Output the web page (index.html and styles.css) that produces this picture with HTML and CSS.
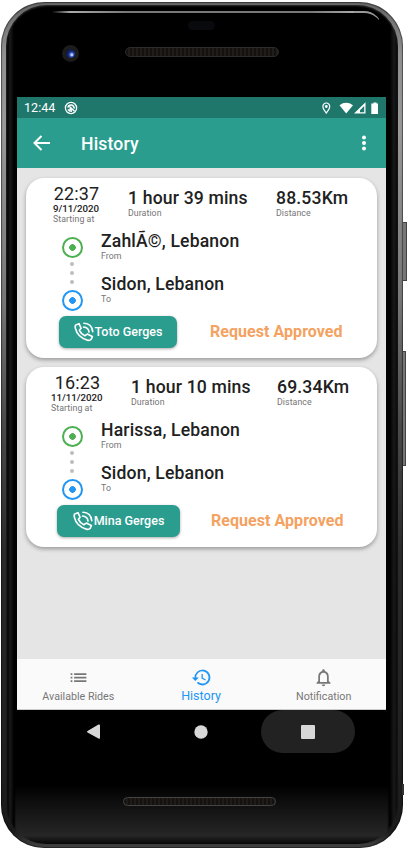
FILE: index.html
```html
<!DOCTYPE html>
<html lang="en">
<head>
<meta charset="utf-8">
<title>History</title>
<link rel="stylesheet" href="styles.css">
</head>
<body>
<svg width="0" height="0" class="defs">
  <symbol id="call" viewBox="0 0 24 24"><g fill="none" stroke="currentColor" stroke-width="2" stroke-linecap="round" stroke-linejoin="round"><path d="M2 3.500 6 2 8.500 7.500 6.500 10Q8.500 14.500 13 16.500L16 14.500 22 17.500 20.500 21Q19 22.500 16 21.800 4 18 1.800 8 1 5 2 3.500Z"/><path d="M12 1.500Q21.500 2 22.500 11.500M11.500 6Q17.500 6.500 18 12"/></g></symbol>
</svg>
<div class="phone">
  <i class="key power"></i><i class="key volume"></i><i class="key lower"></i>
  <div class="glass">
    <i class="shine"></i><i class="shine-end"></i><i class="sensor"></i><i class="camera"></i><i class="speaker top"></i>
    <main class="screen">
      <div class="status">
        <span>12:44</span>
        <svg class="nosync" viewBox="0 0 14 14" fill="none" stroke="#fff"><circle cx="7" cy="7" r="5.600" stroke-width="1.300"/><path d="M3.800 6.500Q4.500 3.700 7.500 3.900 10.200 4.400 10.200 7.500M4 8.300Q5 10.300 8 10.200M5.500 5.500 10.500 10.300M5.500 7.500Q6.500 8.800 8 8.500" stroke-width="1.500"/></svg>
        <svg class="signals" viewBox="0 0 60 14" fill="#fff"><path d="M7.300 2a3.400 3.400 0 0 0-3.400 3.600C3.900 8 7.300 12 7.300 12s3.400-4 3.400-6.400A3.400 3.400 0 0 0 7.300 2Z" fill="none" stroke="#fff" stroke-width="1.200"/><circle cx="7.300" cy="5.500" r="1.400"/><path d="M20.500 4.200Q27 -.5 34 4.200L27.200 12.500ZM46.500 1.200V12.500H35ZM45.200 5 41 9.200V11.300H45.200ZM54.500 1.500h3v1h1.500v10.500h-6.700V2.500h2.200Z" fill-rule="evenodd"/></svg>
      </div>
      <header class="appbar">
        <svg class="back" viewBox="0 0 18 16" fill="none" stroke="#fff" stroke-width="2"><path d="M17 8H2M8.500 1 1.500 8l7 7"/></svg>
        <h1>History</h1>
        <svg class="more" viewBox="0 0 6 16" fill="#fff"><circle cx="3" cy="2.500" r="2"/><circle cx="3" cy="8" r="2"/><circle cx="3" cy="13.400" r="2"/></svg>
      </header>
      <section class="list">
        <article class="card first">
          <div class="facts">
            <div class="start"><b>22:37</b><strong>9/11/2020</strong><small>Starting at</small></div>
            <div class="duration"><b>1 hour 39 mins</b><small>Duration</small></div>
            <div class="distance"><b>88.53Km</b><small>Distance</small></div>
          </div>
          <div class="route">
            <div class="track"><i class="stop from"></i><i class="dot"></i><i class="dot"></i><i class="dot"></i><i class="stop to"></i></div>
            <div class="places"><div><b>ZahlÃ©, Lebanon</b><small>From</small></div><div><b>Sidon, Lebanon</b><small>To</small></div></div>
          </div>
          <div class="actions"><button><svg><use href="#call"/></svg><span>Toto Gerges</span></button><em>Request Approved</em></div>
        </article>
        <article class="card second">
          <div class="facts">
            <div class="start"><b>16:23</b><strong>11/11/2020</strong><small>Starting at</small></div>
            <div class="duration"><b>1 hour 10 mins</b><small>Duration</small></div>
            <div class="distance"><b>69.34Km</b><small>Distance</small></div>
          </div>
          <div class="route">
            <div class="track"><i class="stop from"></i><i class="dot"></i><i class="dot"></i><i class="dot"></i><i class="stop to"></i></div>
            <div class="places"><div><b>Harissa, Lebanon</b><small>From</small></div><div><b>Sidon, Lebanon</b><small>To</small></div></div>
          </div>
          <div class="actions"><button><svg><use href="#call"/></svg><span>Mina Gerges</span></button><em>Request Approved</em></div>
        </article>
      </section>
      <nav class="tabs">
        <a><svg viewBox="0 0 24 24" fill="currentColor"><path d="M3 13h2v-2H3v2zm0 4h2v-2H3v2zm0-8h2V7H3v2zm4 4h14v-2H7v2zm0 4h14v-2H7v2zM7 7v2h14V7H7z"/></svg><span>Available Rides</span></a>
        <a class="active"><svg viewBox="0 0 24 24" fill="currentColor"><path d="M13 3a9 9 0 0 0-9 9H1l3.900 3.900.1.100L9 12H6a7 7 0 1 1 2.100 4.900l-1.400 1.400A9 9 0 1 0 13 3zm-1 5v5l4.300 2.500.7-1.200-3.500-2.100V8H12z"/></svg><span>History</span></a>
        <a><svg viewBox="0 0 24 24" fill="currentColor"><path d="M12 22c1.100 0 2-.9 2-2h-4c0 1.100.9 2 2 2zm6-6v-5c0-3.100-1.600-5.600-4.500-6.300V4a1.500 1.500 0 0 0-3 0v.7C7.600 5.400 6 7.900 6 11v5l-2 2v1h16v-1l-2-2zm-2 1H8v-6c0-2.500 1.500-4.500 4-4.500s4 2 4 4.500v6z"/></svg><span>Notification</span></a>
      </nav>
    </main>
    <div class="system">
      <span><svg viewBox="0 0 16 18" fill="#d8d8d8"><path d="M1.500 8 12.500 1.500Q14 1 14 2.500V14.500Q14 16.500 12.500 15.500L1.500 9.500Q.5 8.800 1.500 8Z"/></svg></span>
      <span><svg viewBox="0 0 16 18" fill="#d8d8d8"><circle cx="8" cy="9" r="6.700"/></svg></span>
      <span class="pressed"><svg viewBox="0 0 16 18" fill="#d8d8d8"><rect x="1" y="2" width="14" height="14" rx="1"/></svg></span>
    </div>
    <i class="speaker bottom"></i>
  </div>
</div>
</body>
</html>
```

FILE: styles.css
```css
* { box-sizing: border-box; }
body { margin: 0; width: 408px; height: 853px; overflow: hidden; background: #fff; font-family: Roboto, sans-serif; }
i, em { font-style: normal; }
svg { display: block; }
.defs { position: absolute; }
.phone { position: relative; width: 402px; height: 846px; margin: 2px 0 0 1px; padding: 3px 5px 4px 5px; border-radius: 44px 44px 43px 43px; background: linear-gradient(#666, #909090 6%, #999 15%, #777 35%, #4a4a4a 50%, #2b2b2b 65%, #202020 90%, #1a1a1a 98%, #444); box-shadow: inset 0 0 1px 1px #0007; }
.glass { position: relative; height: 839px; padding: 92px 11px 0; border-radius: 41px 41px 40px 40px; background: linear-gradient(90deg, #161616, #060606 2px, #1a1a1a 4px, #000 8px, transparent 10px, transparent 381px, #000 384px, #191919 388px, #050505), linear-gradient(#000 93%, #0e0e0e 95%, #262626 99%, #050505); box-shadow: inset 0 1px 2px #333; }
.shine { position: absolute; left: 46px; right: 43px; top: 6px; height: 2px; background: linear-gradient(90deg, transparent, #aaa 6%, #777 25%, #777 85%, #aaa); }
.shine-end { position: absolute; right: 16px; top: 6px; width: 28px; height: 18px; border-top: 2px solid #999; border-radius: 0 28px 0 0; clip-path: inset(0 3px 9px 0); }
.sensor { position: absolute; left: 182px; top: 16px; width: 27px; height: 9px; border-radius: 5px; background: #090a0e; }
.camera { position: absolute; left: 56px; top: 40px; width: 17px; height: 17px; border: 4px solid #1c1c1c; border-radius: 50%; background: radial-gradient(circle at 64% 64%, #b8ccff 0 1px, #3454c8 2px, #14205a 4px, #080d2c); }
.speaker { position: absolute; height: 10px; border: 1px solid #2c2b29; border-radius: 5px; background: repeating-linear-gradient(90deg, #14110f 0 2px, #1f1c19 2px 4px); }
.speaker.top { left: 119px; top: 42px; width: 154px; }
.speaker.bottom { left: 117px; top: 792px; width: 153px; height: 9px; border-color: #444; }
.key { position: absolute; right: -4px; width: 4px; background: #777; border: 1px solid #444; border-left: 0; }
.power { top: 220px; height: 59px; }
.volume { top: 349px; height: 115px; right: -3px; width: 3px; }
.lower { top: 782px; height: 11px; right: -1px; width: 2px; border: 0; background: #333; }
.screen { display: flex; flex-direction: column; width: 369px; height: 613px; background: #e5e5e5; color: #212121; }
.status { display: flex; flex: 0 0 21px; align-items: center; padding: 0 7px 0 7px; background: #1f776c; color: #fff; font-size: 12.600px; }
.nosync { width: 14px; height: 14px; margin-left: 9px; }
.signals { width: 60px; height: 14px; margin-left: auto; }
.appbar { display: flex; flex: 0 0 50px; align-items: center; padding: 0 19px 0 16px; background: #2a9d8f; color: #fff; }
.back { width: 18px; height: 16px; }
h1 { margin: 2px 0 0 30px; font-size: 17.600px; line-height: 21px; font-weight: 500; letter-spacing: .15px; }
.more { width: 6px; height: 16px; margin-left: auto; }
.list { display: flex; flex: 1; flex-direction: column; gap: 9px; padding: 9.500px 9px 0; }
.card { height: 180px; padding-top: 5px; border-radius: 18px; background: #fff; box-shadow: 0 2px 4px #0005; }
b, strong, small { display: block; white-space: nowrap; }
b { font-size: 17.600px; line-height: 21px; font-weight: 500; letter-spacing: .16px; }
small { color: #757575; font-size: 8.800px; line-height: 10px; font-weight: 400; letter-spacing: .06px; }
.facts { display: flex; height: 48.500px; }
.start { width: 102px; padding-left: 27px; }
.start b { width: 47px; text-align: center; font-weight: 400; font-size: 18px; }
.start strong { margin-top: -1px; font-size: 9.700px; line-height: 11px; font-weight: 500; }
.start small { margin-top: 0; }
.duration { width: 148px; padding-top: 5.500px; }
.distance { padding-top: 5.500px; }
.duration small, .distance small { margin-top: -1px; }
.second .start { width: 105px; padding-left: 25px; }
.second .start b { width: 53px; }
.second .duration { width: 146px; }
.route { display: flex; padding: 0 0 0 35px; height: 84px; }
.track { display: flex; flex-direction: column; align-items: center; width: 22px; padding-top: 6px; }
.stop { flex: 0 0 21px; width: 21px; height: 21px; border: 2px solid #4caf50; border-radius: 50%; background: radial-gradient(circle, #4caf50 3px, transparent 3.600px); }
.stop.to { margin-top: 6px; border-color: #2196f3; background: radial-gradient(circle, #2196f3 3px, transparent 3.600px); }
.dot { width: 4px; height: 4px; margin-top: 5px; border-radius: 50%; background: #bdbdbd; }
.stop + .dot { margin-top: 4px; }
.places { padding-left: 18px; }
.places > div { height: 42.500px; }
.places small { margin-top: -1px; }
.actions { display: flex; align-items: center; padding-left: 33px; margin-top: 1px; }
button { display: flex; align-items: center; justify-content: center; width: 118px; height: 32px; padding: 0; border: 0; border-radius: 7px; background: #2a9d8f; box-shadow: 0 1px 3px #0005; color: #fff; font: 500 12.500px Roboto, sans-serif; white-space: nowrap; }
button svg { width: 20px; height: 20px; margin-right: 1px; }
button span { margin-top: -1px; }
em { margin-left: 33px; color: #f4a261; font-size: 16px; line-height: 20px; font-weight: 700; letter-spacing: .05px; white-space: nowrap; }
.second .actions { padding-left: 31px; }
.second button { width: 123px; }
.second em { margin-left: 31px; }
.tabs { display: flex; flex: 0 0 51px; margin-right: 0; padding-right: 1px; background: #fafafa; border-bottom: 1px solid #ccc; }
.tabs a { display: flex; flex: 1; flex-direction: column; align-items: center; padding-top: 8px; color: #777; font-size: 10.700px; line-height: 14px; }
.tabs svg { width: 21px; height: 21px; }
.tabs span { margin-top: 2px; }
.tabs .active { color: #2196f3; font-size: 12.500px; }
.tabs .active span { margin-top: 1px; }
.system { display: flex; width: 369px; height: 43px; padding-left: 29.500px; }
.system span { display: flex; align-items: center; justify-content: center; width: 94px; margin-right: 13px; }
.system svg { width: 16px; height: 18px; }
.system .pressed { margin: 0; border-radius: 22px; background: #222; }
```
